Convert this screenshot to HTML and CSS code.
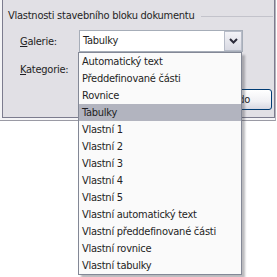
FILE: index.html
```html
<!DOCTYPE html>
<html lang="cs">
<head>
    <meta charset="UTF-8">
    <meta name="viewport" content="width=device-width, initial-scale=1.0">
    <title>Vlastnosti stavebního bloku</title>
    <link rel="stylesheet" href="styles.css">
</head>
<body>
    <div class="dlg-frame">
        <div class="dlg-panel">
            <!-- Group title with line -->
            <div class="dlg-legend">
                <span>Vlastnosti stavebního bloku dokumentu</span>
                <span class="dlg-legend-line"></span>
            </div>

            <!-- Galerie -->
            <div class="dlg-row dlg-row-first">
                <label class="dlg-label"><u>G</u>alerie:</label>
                <div class="dlg-combo">
                    <span class="dlg-combo-text">Tabulky</span>
                    <span class="dlg-combo-btn">
                        <svg width="9" height="6" viewBox="0 0 9 6">
                            <path d="M1 1 L4.5 4.5 L8 1" fill="none" stroke="#2b2b3a" stroke-width="2"></path>
                        </svg>
                    </span>
                </div>
            </div>

            <!-- Kategorie -->
            <div class="dlg-row">
                <label class="dlg-label"><u>K</u>ategorie:</label>
            </div>

            <div class="dlg-buttons">
                <button class="dlg-button">Uložit do</button>
            </div>
        </div>
    </div>

    <!-- Open drop-down list -->
    <ul class="dlg-list">
        <li>Automatický text</li>
        <li>Předdefinované části</li>
        <li>Rovnice</li>
        <li class="selected">Tabulky</li>
        <li>Vlastní 1</li>
        <li>Vlastní 2</li>
        <li>Vlastní 3</li>
        <li>Vlastní 4</li>
        <li>Vlastní 5</li>
        <li>Vlastní automatický text</li>
        <li>Vlastní předdefinované části</li>
        <li>Vlastní rovnice</li>
        <li>Vlastní tabulky</li>
    </ul>
</body>
</html>
```

FILE: styles.css
```css
body {
    margin: 0;
    background: #ffffff;
    font-family: "DejaVu Sans Condensed", "Liberation Sans", sans-serif;
    font-size: 11px;
    letter-spacing: -0.25px;
    color: #1f1f24;
}

.dlg-frame {
    width: 276px;
    padding: 0 0 2px 2px;
    box-sizing: border-box;
    border-right: 1px solid #b4b4bc;
    border-bottom: 1px solid #9a9aa4;
    background: #f4f4f6;
}

.dlg-panel {
    height: 118px;
    box-sizing: border-box;
    padding: 9px 2px 0 5px;
    background: #e1e0e5;
    border-left: 1px solid #7c7c8e;
    border-right: 1px solid #7c7c8e;
    border-bottom: 1px solid #7c7c8e;
}

.dlg-legend {
    display: flex;
    align-items: center;
    gap: 6px;
    height: 14px;
    line-height: 14px;
    margin-right: -1px;
}

.dlg-legend-line {
    flex: 1;
    height: 1px;
    background: #c3c3cb;
}

.dlg-row {
    display: flex;
    align-items: center;
    height: 22px;
    margin-top: 6px;
}

.dlg-row-first {
    margin-top: 7px;
}

.dlg-label {
    width: 59px;
    padding-left: 12px;
}

.dlg-combo {
    display: flex;
    width: 164px;
    height: 22px;
    box-sizing: border-box;
    border: 1px solid #a6adb8;
    background: #ffffff;
}

.dlg-combo-text {
    flex: 1;
    padding-left: 3px;
    line-height: 20px;
}

.dlg-combo-btn {
    width: 18px;
    height: 20px;
    box-sizing: border-box;
    border: 1px solid #b7bcc8;
    background: linear-gradient(#f3f3f7, #d9dae3);
    display: flex;
    align-items: center;
    justify-content: center;
}

.dlg-buttons {
    display: flex;
    justify-content: flex-end;
    margin-top: 9px;
}

.dlg-button {
    width: 80px;
    height: 21px;
    padding: 0 21px 0 0;
    text-align: right;
    font-family: inherit;
    font-size: 11px;
    letter-spacing: inherit;
    color: #1f1f24;
    border: 1px solid #003c74;
    border-radius: 3px;
    background: linear-gradient(#ffffff, #f0f0f4 60%, #d8d8e2);
}

.dlg-list {
    position: absolute;
    left: 78px;
    top: 52px;
    width: 164px;
    margin: 0;
    padding: 0;
    list-style: none;
    box-sizing: border-box;
    border: 1px solid #838896;
    background: #fafafa;
    box-shadow: 3px 3px 2px rgba(60, 60, 70, 0.35);
}

.dlg-list li {
    height: 17px;
    line-height: 17px;
    padding-left: 3px;
    white-space: nowrap;
}

.dlg-list li.selected {
    background: #b2b4bf;
}
```
